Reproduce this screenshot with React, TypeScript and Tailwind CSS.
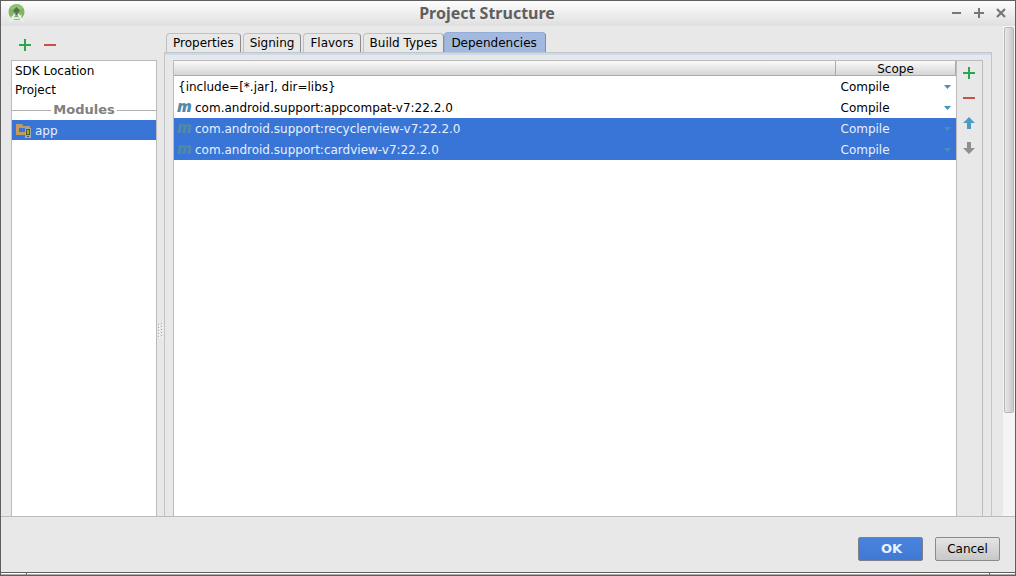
import { useState } from "react"
import clsx from "clsx"

const tabs = ["Properties", "Signing", "Flavors", "Build Types", "Dependencies"]

const dependencies = [
  { name: "{include=[*.jar], dir=libs}", maven: false, selected: false },
  { name: "com.android.support:appcompat-v7:22.2.0", maven: true, selected: false },
  { name: "com.android.support:recyclerview-v7:22.2.0", maven: true, selected: true },
  { name: "com.android.support:cardview-v7:22.2.0", maven: true, selected: true },
]

function PlusIcon() {
  return (
    <svg width="12" height="12" viewBox="0 0 12 12" shapeRendering="crispEdges">
      <path d="M5 0h2v5h5v2H7v5H5V7H0V5h5z" fill="#2ea350" />
    </svg>
  )
}

function MinusIcon() {
  return (
    <svg width="12" height="12" viewBox="0 0 12 12" shapeRendering="crispEdges">
      <path d="M0 5h12v2H0z" fill="#cb5147" />
    </svg>
  )
}

function ArrowIcon({ down = false }: { down?: boolean }) {
  return (
    <svg width="12" height="12" viewBox="0 0 12 12">
      {down ? (
        <path d="M4 0h4v6h4l-6 6-6-6h4z" fill="#8f8f8f" />
      ) : (
        <path d="M6 0l6 6H8v6H4V6H0z" fill="#4b9bc5" />
      )}
    </svg>
  )
}

function StudioLogo() {
  return (
    <svg width="17" height="18" viewBox="0 0 17 18">
      <circle cx="8.500" cy="8" r="8" fill="#7fb765" />
      <path d="M2 4a8 8 0 0 1 13 0L8.500 8z" fill="#8cc670" />
      <path d="M8.500 3l3.500 3.500-1.500 2h-4L5 6.500z" fill="#56704e" />
      <path d="M7.500 8h2v3h-2z" fill="#56704e" />
      <path d="M1 18L6 9.500l1.500 1L3 18z" fill="#eef0ec" />
      <path d="M16 18L11 9.500l-1.500 1L14 18z" fill="#eef0ec" />
      <path d="M3.500 12c3 2 7 2 10-1.500v2.500c-3 2.500-7 2.500-10 1.500z" fill="#eef0ec" />
    </svg>
  )
}

function ModuleIcon() {
  return (
    <svg width="16" height="14" viewBox="0 0 16 14">
      <path d="M0 0h6l1.500 2H14v3h-4v6H0z" fill="#c59a61" />
      <path d="M3 4h6v4H3z" fill="#3875d7" />
      <path d="M9 4h6v10H9z" fill="#aaa6a2" />
      <path d="M10 5h4v6h-4z" fill="#4d5a35" />
      <path d="M11 6h2v4h-2z" fill="#94b820" />
      <path d="M11 12h2v1h-2z" fill="#555" />
    </svg>
  )
}

function MavenIcon({ faded }: { faded: boolean }) {
  return (
    <span
      aria-hidden="true"
      className={clsx(
        "w-3.5 shrink-0 pb-1 font-['Noto_Sans',sans-serif] text-base leading-4 font-black italic",
        faded ? "text-[#5288a8]" : "text-[#5489aa]"
      )}
    >
      m
    </span>
  )
}

function ScopeSelect({ name, selected }: { name: string; selected: boolean }) {
  return (
    <div className="flex items-center pr-[5px]">
      <select
        aria-label={`Scope of ${name}`}
        defaultValue="Compile"
        className="h-5 min-w-0 flex-1 appearance-none bg-transparent outline-none"
      >
        <option>Compile</option>
        <option>Provided</option>
        <option>APK</option>
      </select>
      <svg width="7" height="4" viewBox="0 0 7 4" className="pointer-events-none">
        <path d="M0 0h7L3.500 4z" fill={selected ? "#4a8db8" : "#3f93bf"} />
      </svg>
    </div>
  )
}

function TitleBar() {
  return (
    <header className="flex h-[25px] shrink-0 items-center bg-linear-to-b from-[#fdfdfd] to-[#dfdfdf] pr-[9px] pb-0.5 pl-[7px]">
      <div className="flex flex-1">
        <StudioLogo />
      </div>
      <h1 className="pr-10 font-['Noto_Sans',sans-serif] text-base leading-5 font-bold text-[#5f5f5f]">
        Project Structure
      </h1>
      <div className="flex flex-1 justify-end gap-3 text-[#777]">
        <button type="button" aria-label="Minimize">
          <svg width="10" height="10" viewBox="0 0 10 10">
            <path d="M0 4h9v2H0z" fill="currentColor" />
          </svg>
        </button>
        <button type="button" aria-label="Maximize">
          <svg width="10" height="10" viewBox="0 0 10 10">
            <path d="M4 0h2v4h4v2H6v4H4V6H0V4h4z" fill="currentColor" />
          </svg>
        </button>
        <button type="button" aria-label="Close">
          <svg width="10" height="10" viewBox="0 0 10 10">
            <path d="M1 1l8 8M9 1L1 9" stroke="currentColor" strokeWidth="2.200" />
          </svg>
        </button>
      </div>
    </header>
  )
}

function Sidebar() {
  return (
    <aside className="flex w-[146px] shrink-0 flex-col">
      <div className="flex h-[34px] shrink-0 items-center gap-[13px] px-2 pt-1">
        <button type="button" aria-label="Add module">
          <PlusIcon />
        </button>
        <button type="button" aria-label="Remove module">
          <MinusIcon />
        </button>
      </div>
      <nav className="flex-1 border border-b-0 border-[#bbb] bg-white pt-px">
        <a href="#sdk" className="block px-[3px] leading-[19px]">
          SDK Location
        </a>
        <a href="#project" className="block px-[3px] leading-[19px]">
          Project
        </a>
        <h2 className="flex items-center gap-0.5 text-[13px] leading-5 font-bold text-[#808080]">
          <span className="h-px flex-1 bg-[#b0b0b0]" />
          Modules
          <span className="h-px flex-1 bg-[#b0b0b0]" />
        </h2>
        <a
          href="#app"
          aria-current="page"
          className="flex h-5 items-center gap-[3px] bg-[#3875d7] px-1 pt-0.5 text-[#e8f0fc]"
        >
          <ModuleIcon />
          app
        </a>
      </nav>
    </aside>
  )
}

function DependencyTable() {
  return (
    <div className="flex-1 border-t border-l border-[#bbb] bg-white">
      <table className="w-full table-fixed border-collapse text-left">
        <colgroup>
          <col />
          <col className="w-[120px]" />
        </colgroup>
        <thead>
          <tr className="h-[15px] bg-linear-to-b from-[#fafafa] to-[#d3d3d3] leading-[14px] shadow-[inset_0_-1px_0_#aaa]">
            <th aria-label="Dependency" className="p-0" />
            <th className="border-x border-[#aaa] p-0 text-center font-normal">Scope</th>
          </tr>
        </thead>
        <tbody>
          {dependencies.map((dep) => (
            <tr
              key={dep.name}
              className={clsx("h-[21px]", dep.selected && "bg-[#3875d7] text-[#e8f0fc]")}
            >
              <td className="p-0">
                <div className={clsx("flex items-center gap-1", dep.maven ? "pl-[3px]" : "pl-1")}>
                  {dep.maven && <MavenIcon faded={dep.selected} />}
                  {dep.name}
                </div>
              </td>
              <td className="p-0 pl-[5px]">
                <ScopeSelect name={dep.name} selected={dep.selected} />
              </td>
            </tr>
          ))}
        </tbody>
      </table>
    </div>
  )
}

function TabBar() {
  const [active, setActive] = useState("Dependencies")

  return (
    <div role="tablist" className="flex h-5 items-end pl-0.5">
      {tabs.map((tab) => (
        <button
          key={tab}
          type="button"
          role="tab"
          aria-selected={tab === active}
          onClick={() => setActive(tab)}
          className={clsx(
            "rounded-t-sm border-t border-r border-l whitespace-nowrap",
            tab === active
              ? "-ml-0.5 h-5 border-[#97acd3] border-r-[#8c8c8c] bg-[#a1b8e0] pr-2 pl-1.5 leading-[18px]"
              : "mr-0.5 h-[19px] border-[#c0c0c0] border-r-[#8c8c8c] px-1.5 leading-[19px]"
          )}
        >
          {tab}
        </button>
      ))}
    </div>
  )
}

export default function App() {
  return (
    <div className="flex h-screen flex-col border border-b-0 border-[#5f5f5f] bg-[#e8e8e8] font-['DejaVu_Sans',sans-serif] text-xs text-black">
      <TitleBar />

      <main className="flex min-h-0 flex-1 border-b border-[#bbb]">
        <div className="flex min-w-0 flex-1 pr-[11px] pl-2.5">
          <Sidebar />
          <div className="flex w-[7px] shrink-0 items-center justify-center pt-[118px]">
            <svg width="6" height="15" viewBox="0 0 6 15" shapeRendering="crispEdges">
              {[0, 3, 6, 9, 12].map((y) => (
                <g key={y}>
                  <path d={`M0 ${y + 1}h1v1H0zM3 ${y}h1v1H3z`} fill="#aaa" />
                  <path d={`M1 ${y + 2}h1v1H1zM4 ${y + 1}h1v1H4z`} fill="#fff" />
                </g>
              ))}
            </svg>
          </div>

          <section className="flex min-w-0 flex-1 flex-col pt-1.5">
            <TabBar />
            <div className="flex flex-1 flex-col border-x border-t border-[#c4c4c4]">
              <div className="h-0.5 bg-[#c5dbf2]" />
              <div className="flex flex-1 pt-[5px] pr-2 pl-2">
                <DependencyTable />
                <div className="flex w-[27px] shrink-0 flex-col items-start gap-[13px] border-x border-t border-[#bbb] pt-1.5 pl-1.5">
                  <button type="button" aria-label="Add dependency">
                    <PlusIcon />
                  </button>
                  <button type="button" aria-label="Remove dependency">
                    <MinusIcon />
                  </button>
                  <button type="button" aria-label="Move up">
                    <ArrowIcon />
                  </button>
                  <button type="button" aria-label="Move down">
                    <ArrowIcon down />
                  </button>
                </div>
              </div>
            </div>
          </section>
        </div>

        {/* Scrollbar */}
        <div className="w-3 shrink-0 bg-[#f4f4f4] px-px pt-px">
          <div className="h-[79%] rounded-xs border border-[#b8b8b8] bg-linear-to-r from-[#e8e8e8] to-[#c9c9c9]" />
        </div>
      </main>

      <footer className="flex h-[55px] shrink-0 items-center justify-end gap-3 px-[15px] pt-2">
        <button
          type="submit"
          className="h-6 w-[65px] rounded-xs border border-[#7b808a] bg-linear-to-b from-[#4a83de] to-[#4079d2] pl-0.5 text-[13px] font-bold text-[#eaf2ff]"
        >
          OK
        </button>
        <button
          type="button"
          className="h-6 w-[65px] rounded-xs border border-[#8a8a8a] bg-linear-to-b from-[#e4e4e4] to-[#c8c8c8]"
        >
          Cancel
        </button>
      </footer>

      <div className="flex h-1 shrink-0 border-y border-[#5f5f5f] bg-white">
        <div className="w-[26px] border-r border-b border-[#5f5f5f] border-b-[#aaa]" />
        <div className="flex-1 border-b border-[#aaa]" />
        <div className="w-[26px] border-b border-l border-[#5f5f5f] border-b-[#aaa]" />
      </div>
    </div>
  )
}
